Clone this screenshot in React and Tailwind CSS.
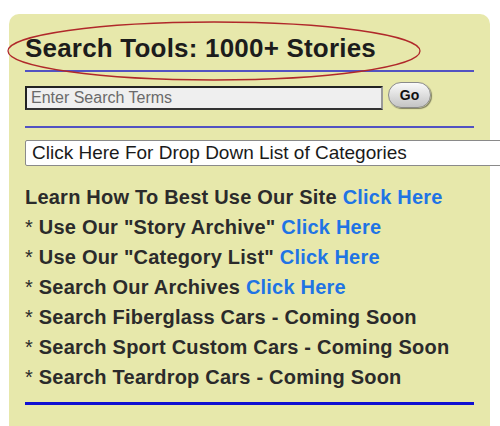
const LINKS = [
  { text: 'Learn How To Best Use Our Site', link: 'Click Here', star: false },
  { text: 'Use Our "Story Archive"', link: 'Click Here', star: true },
  { text: 'Use Our "Category List"', link: 'Click Here', star: true },
  { text: 'Search Our Archives', link: 'Click Here', star: true },
  { text: 'Search Fiberglass Cars - Coming Soon', star: true },
  { text: 'Search Sport Custom Cars - Coming Soon', star: true },
  { text: 'Search Teardrop Cars - Coming Soon', star: true },
];

export default function App() {
  return (
    <div className="w-[500px] h-[426px] overflow-hidden bg-white font-['Liberation_Sans',Arial,sans-serif] pt-[14px] pl-[9px]">
      <div className="relative w-[481px] h-[440px] bg-[#e7e8ab] rounded-t-[10px] pt-[19px] px-4">
        {/* Title */}
        <h2 className="text-[26px] leading-[30px] font-bold tracking-[0.2px] text-[#1c1c1c] whitespace-nowrap">
          Search Tools: 1000+ Stories
        </h2>
        <svg className="absolute left-[-6px] top-[5px]" width="420" height="64" viewBox="0 0 420 64">
          <ellipse cx="211" cy="32" rx="206" ry="29" fill="none" stroke="#b0282a" strokeWidth="1.3" />
        </svg>
        <div className="mt-[7px] h-[2px] bg-[#5252c2]" />

        {/* Search */}
        <div className="flex items-start gap-[5px] mt-[10px]">
          <div className="mt-[4px] w-[358px] h-[24px] bg-[#efefef] border-2 border-t-[#222] border-l-[#222] border-b-[#333] border-r-[#999] px-[4px] flex items-center text-[16px] text-[#6a6a6a]">
            Enter Search Terms
          </div>
          <button className="w-[43px] h-[26px] rounded-full border border-[#8a8a8a] bg-gradient-to-b from-[#fafafa] to-[#c4c4c4] shadow-[1px_1px_1px_rgba(0,0,0,0.45)] text-[14px] font-bold text-[#111] flex items-center justify-center">
            Go
          </button>
        </div>
        <div className="mt-[16px] h-[2px] bg-[#5252c2]" />

        {/* Category dropdown */}
        <div className="mt-[12px] w-[490px] h-[26px] bg-white border border-[#8a8a8a] rounded-[2px] px-[6px] flex items-center text-[19px] text-[#1a1a1a] whitespace-nowrap">
          Click Here For Drop Down List of Categories
        </div>

        {/* Links */}
        <div className="mt-[16px] flex flex-col">
          {LINKS.map((l) => (
            <p key={l.text} className="text-[20px] leading-[30px] font-bold tracking-[0.22px] text-[#2b2b2b] whitespace-nowrap">
              {l.star && <span className="font-normal">* </span>}
              {l.text}
              {l.link && <span className="text-[#1f74e4]"> {l.link}</span>}
            </p>
          ))}
        </div>
        <div className="mt-[10px] h-[3px] bg-[#1010d2]" />
      </div>
    </div>
  );
}
